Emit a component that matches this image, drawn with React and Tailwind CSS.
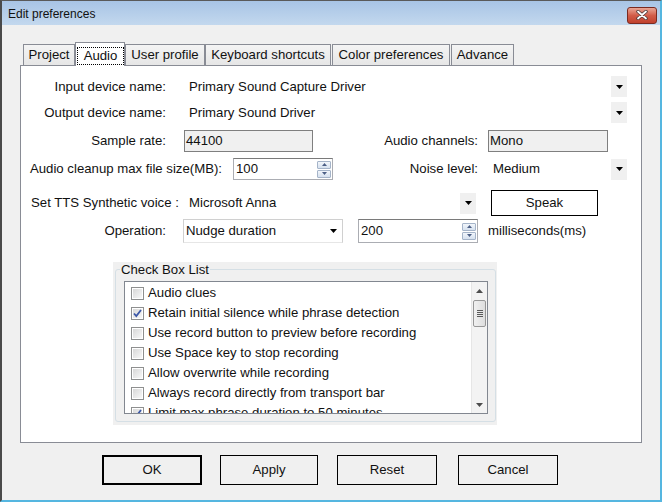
import React from 'react';

const TABS = [
  { name: 'Project', w: 'w-[52px]' },
  { name: 'Audio', w: 'w-[50px]', active: true },
  { name: 'User profile', w: 'w-[80px]' },
  { name: 'Keyboard shortcuts', w: 'w-[126px]' },
  { name: 'Color preferences', w: 'w-[118px] ml-[1px]' },
  { name: 'Advance', w: 'w-[63px] ml-[1px]' },
];

const OPTIONS = [
  { label: 'Audio clues', checked: false },
  { label: 'Retain initial silence while phrase detection', checked: true },
  { label: 'Use record button to preview before recording', checked: false },
  { label: 'Use Space key to stop recording', checked: false },
  { label: 'Allow overwrite while recording', checked: false },
  { label: 'Always record directly from transport bar', checked: false },
  { label: 'Limit max phrase duration to 50 minutes', checked: true },
];

const DownTri = ({ color = '#000' }) => (
  <svg width="7" height="4" viewBox="0 0 7 4">
    <path d="M0 0h7L3.5 4z" fill={color} />
  </svg>
);

const ArrowBox = ({ h = 'h-[21px]' }) => (
  <div className={`w-[16px] ${h} bg-[#f0f0f0] flex items-center justify-center shrink-0`}>
    <DownTri />
  </div>
);

// little up/down spinner of a NumericUpDown
const Spinner = () => (
  <div className="w-[15px] h-full flex flex-col justify-center gap-[1px] py-[1px] pr-[1px] shrink-0">
    <div className="h-[8px] border border-[#a5b4c9] rounded-[1px] bg-gradient-to-b from-[#f2f6fb] to-[#d6e1ef] flex items-center justify-center">
      <svg width="5" height="3" viewBox="0 0 5 3">
        <path d="M0 3h5L2.5 0z" fill="#4c5f86" />
      </svg>
    </div>
    <div className="h-[8px] border border-[#a5b4c9] rounded-[1px] bg-gradient-to-b from-[#f2f6fb] to-[#d6e1ef] flex items-center justify-center">
      <svg width="5" height="3" viewBox="0 0 5 3">
        <path d="M0 0h5L2.5 3z" fill="#4c5f86" />
      </svg>
    </div>
  </div>
);

const CheckBox = ({ checked }) => (
  <div className="w-[13px] h-[13px] border border-[#8e8f8f] bg-white p-[1px] shrink-0">
    <div className="w-full h-full bg-gradient-to-br from-[#d8d8d8] to-[#f8f8f8] flex items-center justify-center">
      {checked && (
        <svg width="9" height="9" viewBox="0 0 9 9">
          <path d="M1 4.5l2.3 2.6L8 1" fill="none" stroke="#3c58a8" strokeWidth="1.8" />
        </svg>
      )}
    </div>
  </div>
);

const Button = ({ children, className = '' }) => (
  <div className={`h-[30px] bg-[#f0f0f0] flex items-center justify-center shrink-0 ${className}`}>
    {children}
  </div>
);

export default function App() {
  return (
    <div className="w-[662px] h-[502px] bg-[#f0f0f0] border-t border-l-2 border-r-2 border-b-2 border-t-[#5a5a5a] border-l-[#4a4a4a] border-r-[#55b6e0] border-b-[#55b6e0] font-['Liberation_Sans',Arial,sans-serif] text-[13.2px] text-[#111] overflow-hidden">
      {/* title bar */}
      <div className="h-[24px] bg-gradient-to-b from-[#a8c4e5] to-[#c3d8ee] flex items-center justify-between pl-[6px] pr-[3px]">
        <span className="text-[12px] mt-[1px]">Edit preferences</span>
        <div className="w-[30px] h-[17px] mt-[4px] rounded-[3px] border border-[#7a2a20] bg-gradient-to-b from-[#e8a595] via-[#d25c48] to-[#c0402c] flex items-center justify-center">
          <svg width="12" height="10" viewBox="0 0 12 10">
            <path d="M2 1.5l8 7M10 1.5l-8 7" stroke="#4a3838" strokeWidth="3.4" strokeLinecap="round" />
            <path d="M2 1.5l8 7M10 1.5l-8 7" stroke="#fff" strokeWidth="1.8" strokeLinecap="round" />
          </svg>
        </div>
      </div>

      {/* tab strip */}
      <div className="mt-[17px] ml-[21px] flex items-end h-[23px] relative z-10">
        {TABS.map((t) =>
          t.active ? (
            <div key={t.name} className={`${t.w} h-[24px] -mb-px bg-white border border-b-0 border-[#898c95] pt-[4px] pl-[1px] pr-[0px]`}>
              <div className="h-[18px] border border-dotted border-black flex items-center justify-center leading-none pb-[1px]">
                {t.name}
              </div>
            </div>
          ) : (
            <div key={t.name} className={`${t.w} h-[21px] bg-gradient-to-b from-[#f4f4f4] to-[#e6e6e6] border border-b-0 border-[#898c95] flex items-center justify-center leading-none whitespace-nowrap`}>
              {t.name}
            </div>
          )
        )}
      </div>

      {/* tab panel */}
      <div className="ml-[18px] w-[622px] h-[378px] bg-white border border-[#898c95] pt-[10px]">
        <div className="flex items-center h-[21px]">
          <div className="w-[145px] text-right">Input device name:</div>
          <div className="ml-[23px] w-[422px]">Primary Sound Capture Driver</div>
          <ArrowBox />
        </div>
        <div className="flex items-center h-[21px] mt-[5px]">
          <div className="w-[145px] text-right">Output device name:</div>
          <div className="ml-[23px] w-[422px]">Primary Sound Driver</div>
          <ArrowBox />
        </div>
        <div className="flex items-center h-[22px] mt-[7px]">
          <div className="w-[145px] text-right">Sample rate:</div>
          <div className="ml-[18px] w-[129px] h-[22px] bg-[#f0f0f0] border border-[#7f7f7f] pl-[1px] flex items-center">44100</div>
          <div className="w-[165px] text-right">Audio channels:</div>
          <div className="ml-[10px] w-[120px] h-[22px] bg-[#f0f0f0] border border-[#7f7f7f] pl-[1px] flex items-center">Mono</div>
        </div>
        <div className="flex items-center h-[22px] mt-[6px]">
          <div className="w-[201px] text-right whitespace-nowrap">Audio cleanup max file size(MB):</div>
          <div className="ml-[11px] w-[100px] h-[22px] border border-[#abadb3] border-t-[#7a7a7a] flex items-center pl-[2px] shrink-0">
            <span className="flex-1">100</span>
            <Spinner />
          </div>
          <div className="w-[145px] text-right">Noise level:</div>
          <div className="ml-[15px] w-[118px]">Medium</div>
          <ArrowBox />
        </div>
        <div className="flex items-center h-[26px] mt-[10px]">
          <div className="w-[168px] pl-[10px] whitespace-nowrap">Set TTS Synthetic voice :</div>
          <div className="w-[271px]">Microsoft Anna</div>
          <ArrowBox />
          <div className="ml-[15px] w-[107px] h-[26px] border border-black bg-white flex items-center justify-center">Speak</div>
        </div>
        <div className="flex items-center h-[24px] mt-[3px]">
          <div className="w-[145px] text-right">Operation:</div>
          <div className="ml-[17px] w-[160px] h-[24px] border border-[#d0d0d0] border-b-[#e6e6e6] flex items-center pl-[2px] pr-[5px] shrink-0">
            <span className="flex-1">Nudge duration</span>
            <DownTri />
          </div>
          <div className="ml-[15px] w-[120px] h-[24px] border border-[#abadb3] border-t-[#7a7a7a] flex items-center pl-[2px] shrink-0">
            <span className="flex-1">200</span>
            <Spinner />
          </div>
          <div className="ml-[10px]">milliseconds(ms)</div>
        </div>

        {/* check box list group */}
        <div className="mt-[19px] ml-[92px] w-[384px] h-[163px] bg-[#f0f0f0] pl-[2px] pr-[1px]">
          <fieldset className="border border-[#d5dfe5] rounded-[3px] h-[160px] pb-[6px]">
            <legend className="ml-[4px] px-[1px] leading-[15px]">Check Box List</legend>
            <div className="mt-[4px] ml-[8px] w-[364px] h-[133px] border border-[#828790] bg-white flex">
              <div className="flex-1 pt-[1px] overflow-hidden">
                {OPTIONS.map((o) => (
                  <div key={o.label} className="h-[20px] flex items-center pl-[6px] gap-[4px] whitespace-nowrap shrink-0">
                    <CheckBox checked={o.checked} />
                    <span>{o.label}</span>
                  </div>
                ))}
              </div>
              {/* scrollbar */}
              <div className="w-[16px] bg-[#f3f3f3] border-l border-[#e6e6e6] flex flex-col">
                <div className="h-[18px] flex items-center justify-center">
                  <svg width="7" height="4" viewBox="0 0 7 4">
                    <path d="M0 4h7L3.5 0z" fill="#4d4d4d" />
                  </svg>
                </div>
                <div className="h-[27px] mx-[1px] border border-[#979797] rounded-[2px] bg-gradient-to-r from-[#f0f0f0] to-[#dedede] flex flex-col items-center justify-center gap-[1px]">
                  <div className="w-[6px] h-[1px] bg-[#5a5a5a]" />
                  <div className="w-[6px] h-[1px] bg-[#5a5a5a]" />
                  <div className="w-[6px] h-[1px] bg-[#5a5a5a]" />
                  <div className="w-[6px] h-[1px] bg-[#5a5a5a]" />
                </div>
                <div className="flex-1" />
                <div className="h-[17px] flex items-center justify-center">
                  <DownTri color="#4d4d4d" />
                </div>
              </div>
            </div>
          </fieldset>
        </div>
      </div>

      {/* dialog buttons */}
      <div className="mt-[12px] ml-[100px] flex">
        <Button className="w-[100px] border-2 border-black">OK</Button>
        <Button className="ml-[18px] w-[98px] border border-black">Apply</Button>
        <Button className="ml-[19px] w-[100px] border border-black">Reset</Button>
        <Button className="ml-[21px] w-[100px] border border-black">Cancel</Button>
      </div>
    </div>
  );
}
